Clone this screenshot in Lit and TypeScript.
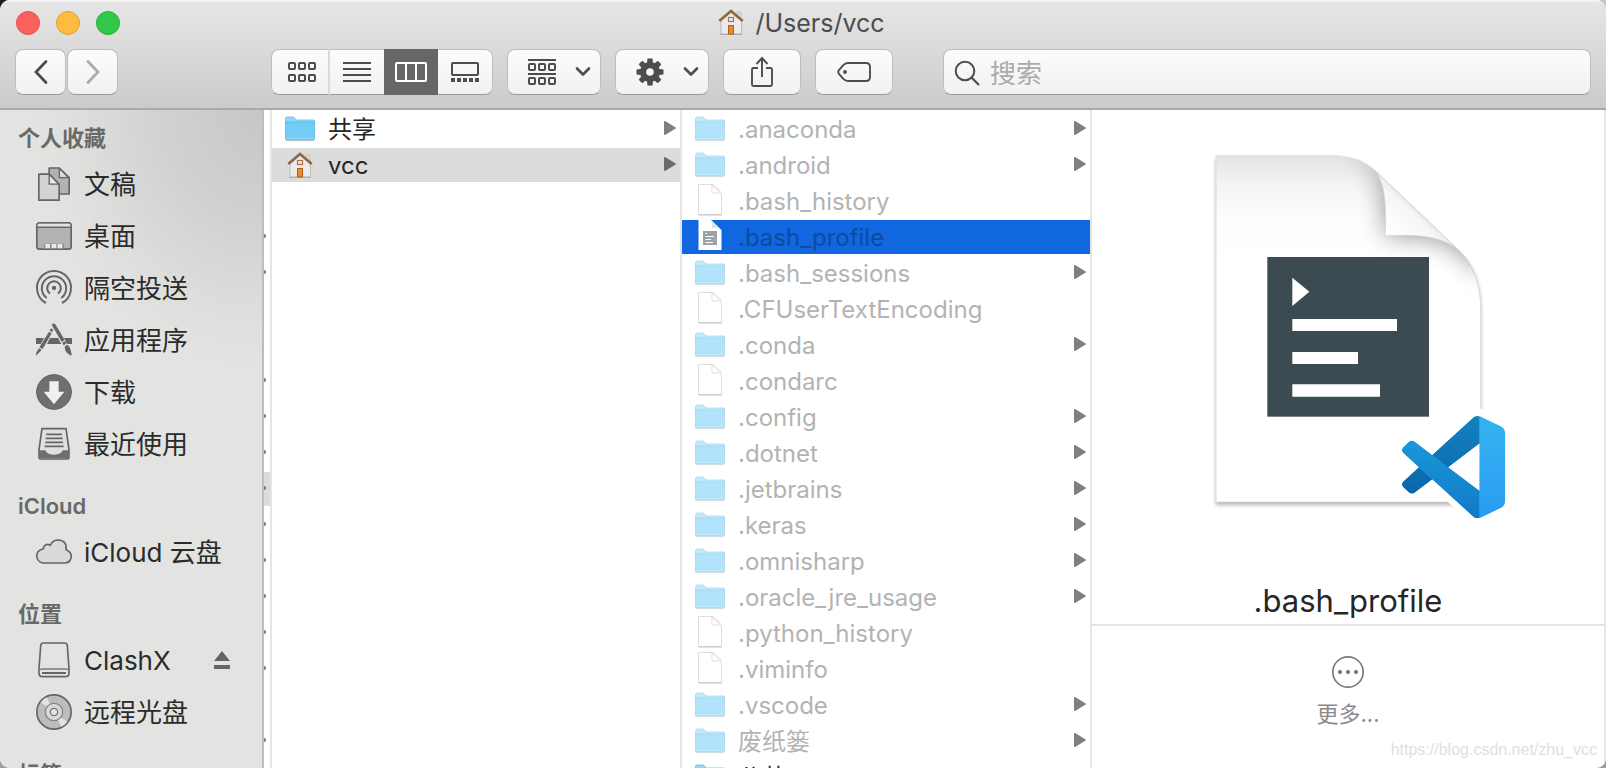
import { LitElement, html, svg, css, nothing } from "lit";
import { customElement, state } from "lit/decorators.js";
import { classMap } from "lit/directives/class-map.js";

type Kind = "folder" | "file" | "script" | "home";
interface Entry { name: string; kind: Kind; dim?: boolean; selected?: boolean; arrow?: boolean }

const folder = (name: string, dim = true): Entry => ({ name, kind: "folder", dim, arrow: true });
const file = (name: string): Entry => ({ name, kind: "file", dim: true });

const USERS: Entry[] = [
  folder("共享", false),
  { name: "vcc", kind: "home", selected: true, arrow: true },
];

const HOME: Entry[] = [
  folder(".anaconda"), folder(".android"), file(".bash_history"),
  { name: ".bash_profile", kind: "script", dim: true },
  folder(".bash_sessions"), file(".CFUserTextEncoding"), folder(".conda"),
  file(".condarc"), folder(".config"), folder(".dotnet"), folder(".jetbrains"),
  folder(".keras"), folder(".omnisharp"), folder(".oracle_jre_usage"),
  file(".python_history"), file(".viminfo"), folder(".vscode"), folder("废纸篓"),
  folder("公共", false),
];

// Rows of the scrolled-away parent column: 1 has a disclosure arrow, 2 is the open one.
const PARENT = [0, 0, 0, 1, 1, 0, 0, 1, 1, 1, 2, 1, 1, 1, 1, 1, 0, 1];

const SIDEBAR = [
  { title: "个人收藏", items: [["docs", "文稿"], ["desktop", "桌面"], ["airdrop", "隔空投送"], ["apps", "应用程序"], ["downloads", "下载"], ["recents", "最近使用"]] },
  { title: "iCloud", items: [["cloud", "iCloud 云盘"]] },
  { title: "位置", items: [["drive", "ClashX"], ["disc", "远程光盘"]] },
  { title: "标签", items: [] as string[][] },
];

const SIDE_ICONS: Record<string, unknown> = {
  docs: svg`
    <g stroke="#656564" stroke-width="5" stroke-linejoin="round">
      <path d="M39.500 3H70L99.500 32V81H39.500Z" fill="#b2b2b1"/>
      <path d="M70 4V32H98Z" fill="#dcdcdb" stroke-width="4"/>
      <path d="M8.500 21.500H39.500L69.500 52V99.500H8.500Z" fill="#d3d3d2"/>
      <path d="M39.500 22V51.500H69Z" fill="#e6e6e5" stroke-width="4"/>
    </g>`,
  desktop: svg`
    <rect x="2.500" y="11.500" width="103" height="79" rx="8" fill="#b2b2b1" stroke="#656564" stroke-width="5"/>
    <path d="M5 22V18Q5 14 10 14H98Q103 14 103 18V22Z" fill="#e3e3e2"/>
    <path d="M4 25H104" stroke="#656564" stroke-width="4"/>
    <path d="M24 74H84V88H24Z" fill="#8c8c8b"/>
    <path d="M28 75H42V88H28ZM47 75H61V88H47ZM65 75H79V88H65Z" fill="#e9e9e8"/>`,
  airdrop: svg`
    <g fill="none" stroke="#656564" stroke-width="6">
      <path d="M30 96A51 51 0 1 1 78 96"/><path d="M32 81A36.500 36.500 0 1 1 76 81"/>
      <path d="M42 68A20.500 20.500 0 1 1 66 68"/></g>
    <circle cx="54" cy="51" r="6.500" fill="#656564"/>`,
  apps: svg`
    <g fill="#656564">
    <path d="M0 45H24L14 63H0ZM42 45H66L76 63H33ZM84 45H108V63H94Z"/>
    <path d="M45 16L52 20L49 27L41 23ZM39 26L47 31L20 78L10 73ZM9 76L17 81L0 98L1 88Z"/>
    <path d="M47 5Q52 -1 58 4L86 51L77 57ZM79 59L88 54L92 61L83 67ZM86 70L95 65Q106 76 107 98Q86 92 86 70Z"/></g>`,
  downloads: svg`
    <circle cx="54" cy="51" r="52" fill="#6f6f6e" stroke="#5f5f5e" stroke-width="3"/>
    <path d="M40 19H68V50H85L54 88L23 50H40Z" fill="#f0f0ef"/>`,
  recents: svg`
    <path d="M18 5H90L99 68V91Q99 96 93 96H15Q9 96 9 91V68Z" fill="#e0e0df" stroke="#656564" stroke-width="5"/>
    <path d="M9 70H28Q33 83 54 83Q75 83 80 70H99V94H9Z" fill="#6f6f6e"/>
    <path d="M31 22H78M29 34H80M28 46H81M26 58H83" stroke="#656564" stroke-width="5"/>`,
  cloud: svg`
    <path d="M22 84H87Q105 82 106 64Q105 49 90 44Q94 17 67 15Q49 15 43 31Q27 22 21 42Q2 46 2 63Q4 82 22 84Z"
      fill="#dadad9" stroke="#656564" stroke-width="5" stroke-linejoin="round"/>`,
  drive: svg`
    <path d="M22 0H86Q93 0 94 8L99 77V90Q99 101 88 101H20Q9 101 9 90V77L14 8Q15 0 22 0Z" fill="#e3e3e2" stroke="#656564" stroke-width="5"/>
    <path d="M10 80Q14 78 20 78H88Q94 78 98 80" fill="none" stroke="#7b7b7a" stroke-width="4"/>
    <path d="M18 90H90" stroke="#656564" stroke-width="6"/>`,
  disc: svg`
    <circle cx="54" cy="51" r="51.500" fill="#bcbcbb" stroke="#656564" stroke-width="5"/>
    <path d="M54 51L14 22A49 49 0 0 1 32 7Z" fill="#e3e3e2"/>
    <path d="M54 51L94 80A49 49 0 0 1 76 95Z" fill="#e3e3e2"/>
    <circle cx="54" cy="51" r="26" fill="#d9d9d8" stroke="#858584" stroke-width="4"/>
    <circle cx="54" cy="51" r="11" fill="#e3e3e2" stroke="#757574" stroke-width="4"/>`,
};

const squares = (y: number) => [0, 10, 20].map(
  (x) => svg`<rect x=${x + 1} y=${y + 1} width="6" height="6" rx="1" fill="none" stroke="#4d4d4d" stroke-width="2"/>`);

const house = svg`
  <path d="M19 3h4v6h-4z" fill="#dcdcdc" stroke="#b5b5b5" stroke-width=".6"/>
  <path d="M3 12L13 3L23.500 12V25H3Z" fill="#e9ebee" stroke="#a9a9a9" stroke-width=".7"/>
  <path d="M2 25.400H24" stroke="#777" stroke-opacity=".5" stroke-width=".8"/>
  <path d="M1.300 12L13 2L24.700 12" fill="none" stroke="#8f6a43" stroke-width="2.800"/>
  <rect x="10.500" y="8.500" width="5" height="4" fill="#dfe9f5" stroke="#b5713c" stroke-width="1.200"/>
  <rect x="10.500" y="16.500" width="5" height="8.500" fill="#ef8a22" stroke="#b35f14" stroke-width="1"/>`;

const ENTRY_ICONS: Record<Kind, unknown> = {
  folder: svg`
    <path d="M0.500 7V2.500Q0.500 1 2 1H8Q9 1 10 2.500L11 4H28.500Q29.500 4 29.500 5V10H0.500Z" fill="#8fd8fb" stroke="#6bb9e0" stroke-width=".8"/>
    <path d="M0.500 6H29.500V23Q29.500 24 28.500 24H1.500Q0.500 24 0.500 23Z" fill="#72cdf7" stroke="#5db4dd" stroke-width=".8"/>
    <path d="M1 22.500H29" stroke="#9bdefc" stroke-width=".8"/>
    <path d="M1 24.700H29" stroke="#888" stroke-opacity=".5" stroke-width=".8"/>`,
  file: svg`
    <path d="M3.500 .5H16Q18.500 .5 20 2L25 7Q26.500 9 26.500 12V30.500H3.500Z" fill="#fff" stroke="#cfcfcf" stroke-width=".9"/>
    <path d="M17 1V9H25.500Z" fill="#fff" stroke="#d2d2d2" stroke-width=".8"/>
    <path d="M3.500 31H26.500" stroke="#a6a6a6" stroke-width=".8"/>`,
  script: svg`
    <path d="M3.500 0H16L26.500 10V30H3.500Z" fill="#fff"/>
    <path d="M17 1V8H24Z" fill="#e2e2e2"/>
    <rect x="8" y="11" width="14" height="14" fill="#9aa3a7"/>
    <path d="M10.500 13.500H12M10.500 16.500H19M10.500 19.500H16M10.500 22.500H18" stroke="#fff" stroke-width="1.200"/>`,
  home: house,
};

@customElement("finder-column")
class FinderColumn extends LitElement {
  static properties = { entries: { attribute: false }, active: {} };
  declare entries: Entry[];
  declare active: string;

  static styles = css`
    :host { display: block; overflow: hidden; background: #fff; }
    .rows { list-style: none; margin: 0; padding: 2px 0 0; display: flex; flex-direction: column; gap: 2px; }
    .row {
      display: flex; align-items: center; gap: 13px; box-sizing: border-box;
      width: 100%; height: 34px; padding: 0 4px 0 13px; border: 0; background: none;
      font: inherit; color: #262626; text-align: left; overflow: hidden;
    }
    .name { flex: 1; line-height: 34px; padding-top: 2px; white-space: nowrap; }
    .icon { width: 30px; height: 32px; flex: none; }
    .file, .script { margin-bottom: 2px; }
    .folder { height: 26px; }
    .home { height: 30px; }
    .dim .name { color: #b3b3b3; }
    .dim .folder { opacity: .55; }
    .dim .file { opacity: .8; }
    .open { background: #dcdcdc; }
    .active { background: #1167df; }
    .active .name { color: #0f4aa0; }
    .arrow { width: 12px; height: 16px; margin-bottom: 2px; flex: none; fill: #7f7f7f; }
    .open .arrow { fill: #6b6b6b; }
  `;

  private box(kind: Kind) {
    return kind === "folder" ? "0 0 30 26" : kind === "home" ? "-2 -2 30 30" : "0 0 30 32";
  }

  render() {
    return html`<ul class="rows">${this.entries.map((e) => html`
      <li><button class=${classMap({ row: true, dim: !!e.dim, open: !!e.selected, active: e.name === this.active })}
        @click=${() => this.dispatchEvent(new CustomEvent("pick", { detail: e.name }))}>
        <svg class="icon ${e.kind}" viewBox=${this.box(e.kind)} aria-hidden="true">${ENTRY_ICONS[e.kind]}</svg>
        <span class="name">${e.name}</span>
        ${e.arrow ? html`<svg class="arrow" viewBox="0 0 12 16" aria-hidden="true"><path d="M0 2.200Q0 .5 1.600 1.300L11.200 7.200Q12.600 8 11.200 8.800L1.600 14.700Q0 15.500 0 13.800Z"/></svg>` : nothing}
      </button></li>`)}</ul>`;
  }
}

@customElement("finder-preview")
class FinderPreview extends LitElement {
  static properties = { name: {} };
  declare name: string;

  static styles = css`
    :host { display: flex; flex-direction: column; background: #fff; overflow: hidden; }
    .card { display: flex; flex-direction: column; align-items: center; padding-top: 40px; border-bottom: 2px solid #e5e5e5; }
    .art { width: 316px; height: 375px; }
    .title { margin: 56px 0 0; padding-bottom: 3px; font-size: 31px; line-height: 40px; font-weight: 400; color: #262626; }
    .more {
      display: flex; flex-direction: column; align-items: center; gap: 8px; align-self: center;
      margin-top: 29px; padding: 0; border: 0; background: none; font: inherit; font-size: 22px; line-height: 34px; color: #8a8a8d;
    }
    .dots { width: 34px; height: 34px; }
  `;

  render() {
    return html`
      <div class="card">
        <svg class="art" viewBox="0 60 948 1125" aria-hidden="true">
          <defs>
            <linearGradient id="top" x1="0" y1="0" x2="0" y2="1">
              <stop offset="0" stop-color="#e3e3e3"/><stop offset=".08" stop-color="#f3f3f3"/><stop offset=".18" stop-color="#fdfdfd"/><stop offset=".3" stop-color="#fff"/>
            </linearGradient>
            <linearGradient id="curl" x1="600" y1="310" x2="700" y2="205" gradientUnits="userSpaceOnUse">
              <stop offset="0" stop-color="#fff"/><stop offset=".6" stop-color="#f6f6f6"/><stop offset="1" stop-color="#d9d9d9"/>
            </linearGradient>
            <linearGradient id="arm" x1="0" y1="0" x2="0" y2="1"><stop offset="0" stop-color="#1482c0"/><stop offset="1" stop-color="#0b66ab"/></linearGradient>
            <linearGradient id="front" x1="0" y1="0" x2="0" y2="1"><stop offset="0" stop-color="#1a97d8"/><stop offset="1" stop-color="#1179c8"/></linearGradient>
            <linearGradient id="side" x1="0" y1="0" x2="0" y2="1"><stop offset="0" stop-color="#34b4f2"/><stop offset="1" stop-color="#2a9bf0"/></linearGradient>
            <filter id="soft" x="-20%" y="-20%" width="140%" height="140%"><feGaussianBlur stdDeviation="6"/></filter>
            <filter id="wide" x="-60%" y="-60%" width="220%" height="220%"><feGaussianBlur stdDeviation="38"/></filter>
            <clipPath id="sheet"><path d="M78 77H420C490 77 525 95 555 122L805 360C850 400 872 460 872 545V1116H78Z"/></clipPath>
            <clipPath id="logo"><path d="M70.9 99.3C72.500 99.900 74.300 99.900 75.900 99.100L96.500 89.200C98.600 88.200 100 86 100 83.600V16.400C100 14 98.600 11.800 96.500 10.800L75.900.9C73.800-.1 71.300.1 69.500 1.400L68.800 2.100L29.400 38L12.200 25C10.600 23.800 8.400 23.900 6.900 25.200L1.400 30.300C-.5 31.900-.5 34.800 1.400 36.400L16.200 50L1.400 63.600C-.5 65.200-.5 68.100 1.400 69.700L6.900 74.800C8.400 76.100 10.600 76.200 12.200 75L29.400 62L68.800 97.900C69.400 98.500 70.100 99 70.900 99.300ZM75 27.300L45.100 50L75 72.700Z" clip-rule="evenodd"/></clipPath>
          </defs>
          <path d="M78 90H420C490 90 525 105 555 134L805 370C850 410 872 460 872 545V1124H78Z" fill="#000" opacity=".32" filter="url(#soft)"/>
          <path d="M78 77H420C490 77 525 95 555 122L805 360C850 400 872 460 872 545V1116H78Z" fill="url(#top)" stroke="#d5d5d5" stroke-width="2"/>
          <g clip-path="url(#sheet)">
            <path d="M480 40L560 110C590 160 586 230 586 318C690 312 770 325 805 360L890 440V240Z" fill="#000" opacity=".42" filter="url(#wide)"/>
          </g>
          <path d="M78 1116V77H420C490 77 525 95 555 122" fill="none" stroke="#e6e6e6" stroke-width="3"/>
          <path d="M555 122C582 160 589 200 586 318C680 312 755 318 805 360Z" fill="url(#curl)" stroke="#cfcfcf" stroke-width="2"/>
          <rect x="232" y="381" width="485" height="479" fill="#3b4b51"/>
          <path d="M307 443L358 485L307 528ZM307 567H621V603H307ZM307 666H504V702H307ZM307 763H570V800H307Z" fill="#fff"/>
          <g transform="translate(636 857) scale(3.09)">
            <path d="M75 0L100 11V89L75 100L29 62L10 76L0 67V33L10 24L29 38L70 1Z" fill="#fff" stroke="#fff" stroke-width="14" stroke-linejoin="round"/>
            <g clip-path="url(#logo)">
              <path d="M96.500 10.800L75.900.9C73.500-.3 70.600.2 68.800 2.100L1.300 63.600C-.5 65.200-.5 68.100 1.300 69.700L6.800 74.800C8.300 76.100 10.500 76.200 12.100 75L93.400 13.400Z" fill="url(#arm)"/>
              <path d="M96.500 89.200L75.900 99.100C73.500 100.300 70.600 99.800 68.800 97.900L1.300 36.400C-.5 34.800-.5 31.900 1.300 30.300L6.800 25.200C8.300 23.900 10.500 23.800 12.100 25L93.400 86.600Z" fill="url(#front)"/>
              <path d="M75 0H100V100H75Z" fill="url(#side)"/>
            </g>
          </g>
        </svg>
        <h2 class="title">${this.name}</h2>
      </div>
      <button class="more">
        <svg class="dots" viewBox="0 0 34 34" aria-hidden="true">
          <circle cx="17" cy="17" r="15.200" fill="none" stroke="#7c7c7c" stroke-width="1.700"/>
          <g fill="#6f6f6f"><circle cx="9" cy="17" r="2"/><circle cx="17" cy="17" r="2"/><circle cx="25" cy="17" r="2"/></g>
        </svg>
        <span>更多...</span>
      </button>`;
  }
}

@customElement("app-root")
class AppRoot extends LitElement {
  @state() private selected = ".bash_profile";

  static styles = css`
    :host {
      display: block; height: 100vh; overflow: hidden; position: relative;
      background: linear-gradient(90deg, #1c1c22 0 50%, #c3c6d2 50%) top / 100% 50% no-repeat #9c9c9c;
      font-family: Inter, "Noto Sans CJK SC", sans-serif; font-size: 24px; color: #262626;
    }
    .window { display: flex; flex-direction: column; height: 100%; border-radius: 10px; overflow: hidden; background: #fff; }
    .header {
      box-sizing: border-box; height: 110px; flex: none; display: flex; flex-direction: column;
      background: linear-gradient(#e6e6e6, #cbcbcb); border-bottom: 2px solid #a9a9a9; box-shadow: inset 0 2px #f3f3f3;
    }
    .titlebar { display: grid; grid-template-columns: 1fr auto 1fr; align-items: center; height: 45px; padding: 0 20px 0 16px; }
    .lights { display: flex; gap: 16px; }
    .light { width: 24px; height: 24px; padding: 0; border-radius: 50%; border: 1px solid; }
    .close { background: #fc605c; border-color: #e2504c; }
    .min { background: #fdbc40; border-color: #dfa032; }
    .max { background: #34c84a; border-color: #27ab38; }
    .path { display: flex; align-items: center; gap: 10px; margin: 0; font-size: 25px; line-height: 32px; font-weight: 400; color: #4d4d4d; }
    .house { width: 28px; height: 28px; }
    .toolbar { display: flex; align-items: center; gap: 14px; padding: 4px 15px 0; }
    .nav { display: flex; gap: 1px; margin-right: 139px; }
    .btn {
      box-sizing: border-box; height: 46px; padding: 0; display: flex; align-items: center; justify-content: center;
      border: 1px solid #bdbdbd; border-bottom-color: #9c9c9c; border-radius: 8px;
      background: linear-gradient(#fcfcfc, #f1f1f1);
    }
    .step { width: 51px; }
    .views { display: grid; grid-template-columns: 59px 54px 54px 55px; }
    .view:first-child { border-radius: 8px 0 0 8px; border-right: 2px solid #dadada; padding-left: 3px; }
    .view:nth-child(2) { border-radius: 0; border-width: 1px 0; }
    .view:nth-child(3) { border-radius: 0; border: 0; background: #666; }
    .view:last-child { border-radius: 0 8px 8px 0; border-left: 0; }
    .menu { width: 94px; justify-content: space-between; padding: 0 9px 0 20px; }
    .tool { width: 78px; }
    .search { flex: 1; margin-left: 36px; justify-content: flex-start; gap: 10px; padding: 0 10px; }
    .query { flex: 1; min-width: 0; border: 0; padding: 2px 0 0; background: none; outline: 0; font: inherit; font-size: 26px; line-height: 34px; height: 36px; color: #333; }
    .query::placeholder { color: #ababab; opacity: 1; }
    .body { flex: 1; min-height: 0; display: grid; grid-template-columns: 262px 2px 6px 2px 408px 2px 408px 2px minmax(0, 1fr) 2px; }
    .rule { background: #e5e5e5; }
    .edge { background: #bdbdbb; }
    .side {
      overflow: hidden; padding-top: 8px; display: flex; flex-direction: column; gap: 15px;
      background: radial-gradient(ellipse 230px 260px at 100% 0, #c7c7c5 0, #d0d0ce 40%, #dededc 80%, #e3e3e1 100%) #e3e3e1;
    }
    .heading { margin: 0; padding-left: 18px; font-size: 22px; line-height: 40px; font-weight: 600; color: #696968; }
    .places { list-style: none; margin: 0; padding: 1px 0 0; }
    .place { display: flex; align-items: center; height: 52px; padding: 0 31px 0 36px; }
    .link { flex: 1; display: flex; align-items: center; gap: 12px; font-size: 26px; line-height: 52px; color: #2b2b2a; text-decoration: none; white-space: nowrap; }
    .glyph { width: 36px; height: 36px; overflow: visible; flex: none; }
    .eject { width: 18px; height: 20px; padding: 0; border: 0; background: none; display: flex; }
    .parent { overflow: hidden; padding-top: 2px; display: flex; flex-direction: column; gap: 2px; background: #fff; }
    .slot { height: 34px; flex: none; display: flex; align-items: center; }
    .slot-open { background: #dcdcdc; }
    .tip { width: 2px; height: 4px; margin-bottom: 2px; background: #777; border-radius: 0 2px 2px 0; }
    .mark { position: absolute; right: 9px; bottom: 6px; font-size: 16px; line-height: 24px; color: #e0e0e0; font-family: "Liberation Sans", sans-serif; }
  `;

  private icon(w: number, h: number, body: unknown) {
    return html`<svg width=${w} height=${h} viewBox="0 0 ${w} ${h}" aria-hidden="true">${body}</svg>`;
  }

  private chevron() {
    return this.icon(16, 12, svg`<path d="M2 2.500L8 8.500L14 2.500" fill="none" stroke="#4d4d4d" stroke-width="2.600" stroke-linecap="round" stroke-linejoin="round"/>`);
  }

  private place([icon, label]: string[]) {
    return html`<li class="place">
      <a class="link" href="#${icon}"><svg class="glyph" viewBox="0 0 108 108" aria-hidden="true">${SIDE_ICONS[icon]}</svg>${label}</a>
      ${icon === "drive" ? html`<button class="eject" aria-label="推出">${this.icon(18, 18, svg`<path d="M9 0L17 10H1ZM1 14H17V18H1Z" fill="#656564"/>`)}</button>` : nothing}
    </li>`;
  }

  render() {
    const pick = (e: CustomEvent) => { this.selected = e.detail; };
    return html`
      <div class="window">
        <header class="header">
          <div class="titlebar">
            <div class="lights">
              <button class="light close" aria-label="关闭"></button>
              <button class="light min" aria-label="最小化"></button>
              <button class="light max" aria-label="缩放"></button>
            </div>
            <h1 class="path"><svg class="house" viewBox="0 0 26 28" aria-hidden="true">${house}</svg>/Users/vcc</h1>
          </div>
          <div class="toolbar">
            <div class="nav">
              <button class="btn step" aria-label="后退">${this.icon(16, 26, svg`<path d="M13 2.500L3 13L13 23.500" fill="none" stroke="#4d4d4d" stroke-width="2.800" stroke-linecap="round"/>`)}</button>
              <button class="btn step" aria-label="前进">${this.icon(16, 26, svg`<path d="M3 2.500L13 13L3 23.500" fill="none" stroke="#ababab" stroke-width="2.800" stroke-linecap="round"/>`)}</button>
            </div>
            <div class="views">
              <button class="btn view" aria-label="图标">${this.icon(28, 20, svg`${squares(0)}${squares(12)}`)}</button>
              <button class="btn view" aria-label="列表">${this.icon(28, 20, svg`<path d="M0 1H28M0 7H28M0 13H28M0 19H28" stroke="#4d4d4d" stroke-width="2"/>`)}</button>
              <button class="btn view" aria-label="分栏" aria-pressed="true">${this.icon(32, 20, svg`<rect x="1" y="1" width="30" height="18" rx="1" fill="none" stroke="#fff" stroke-width="2"/><path d="M11 1V19M21 1V19" stroke="#fff" stroke-width="2"/>`)}</button>
              <button class="btn view" aria-label="画廊">${this.icon(28, 20, svg`<rect x="1" y="1" width="26" height="12" rx="1" fill="none" stroke="#4d4d4d" stroke-width="2"/><path d="M0 16h4v4h-4zM6 16h4v4h-4zM12 16h4v4h-4zM18 16h4v4h-4zM24 16h4v4h-4z" fill="#4d4d4d"/>`)}</button>
            </div>
            <button class="btn menu" aria-label="分组">${this.icon(28, 26, svg`<path d="M0 1H28M0 15H28" stroke="#4d4d4d" stroke-width="2"/>${squares(4)}${squares(18)}`)}${this.chevron()}</button>
            <button class="btn menu" aria-label="操作">${this.icon(28, 28, svg`
              <g fill="#4d4d4d">${[0, 45, 90, 135].map((a) => svg`<path d="M11.500 .5h5l.7 6v15l-.7 6h-5l-.7-6v-15z" transform="rotate(${a} 14 14)"/>`)}<circle cx="14" cy="14" r="10"/></g>
              <circle cx="14" cy="14" r="3.800" fill="#f7f7f7"/>`)}${this.chevron()}</button>
            <button class="btn tool" aria-label="共享">${this.icon(24, 32, svg`<path d="M8 12H3.500Q2 12 2 13.500V28.500Q2 30 3.500 30H20.500Q22 30 22 28.500V13.500Q22 12 20.500 12H16M12 21V2M6.500 8L12 2L17.500 8" fill="none" stroke="#4d4d4d" stroke-width="1.900"/>`)}</button>
            <button class="btn tool" aria-label="标签">${this.icon(34, 22, svg`<path d="M11 2H29Q33 2 33 6V16Q33 20 29 20H11Q8 20 6 17.500L2 13Q.5 11 2 9L6 4.500Q8 2 11 2Z" fill="none" stroke="#4d4d4d" stroke-width="1.900"/><circle cx="8" cy="11" r="1.900" fill="#4d4d4d"/>`)}</button>
            <label class="btn search">
              ${this.icon(26, 28, svg`<circle cx="11" cy="13" r="9.300" fill="none" stroke="#4d4d4d" stroke-width="2"/><path d="M17.500 19.500L25 27" stroke="#4d4d4d" stroke-width="2.200"/>`)}
              <input class="query" type="text" placeholder="搜索" aria-label="搜索">
            </label>
          </div>
        </header>
        <main class="body">
          <nav class="side">${SIDEBAR.map((g) => html`<section>
            <h2 class="heading">${g.title}</h2>
            ${g.items.length ? html`<ul class="places">${g.items.map((i) => this.place(i))}</ul>` : nothing}</section>`)}</nav>
          <div class="edge"></div>
          <div class="parent">${PARENT.map((p) => html`<div class=${classMap({ slot: true, "slot-open": p === 2 })}>${p ? html`<i class="tip"></i>` : nothing}</div>`)}</div>
          <div class="rule"></div>
          <finder-column .entries=${USERS}></finder-column>
          <div class="rule"></div>
          <finder-column .entries=${HOME} .active=${this.selected} @pick=${pick}></finder-column>
          <div class="rule"></div>
          <finder-preview .name=${this.selected}></finder-preview>
          <div class="rule"></div>
        </main>
      </div>
      <span class="mark">https://blog.csdn.net/zhu_vcc</span>`;
  }
}
